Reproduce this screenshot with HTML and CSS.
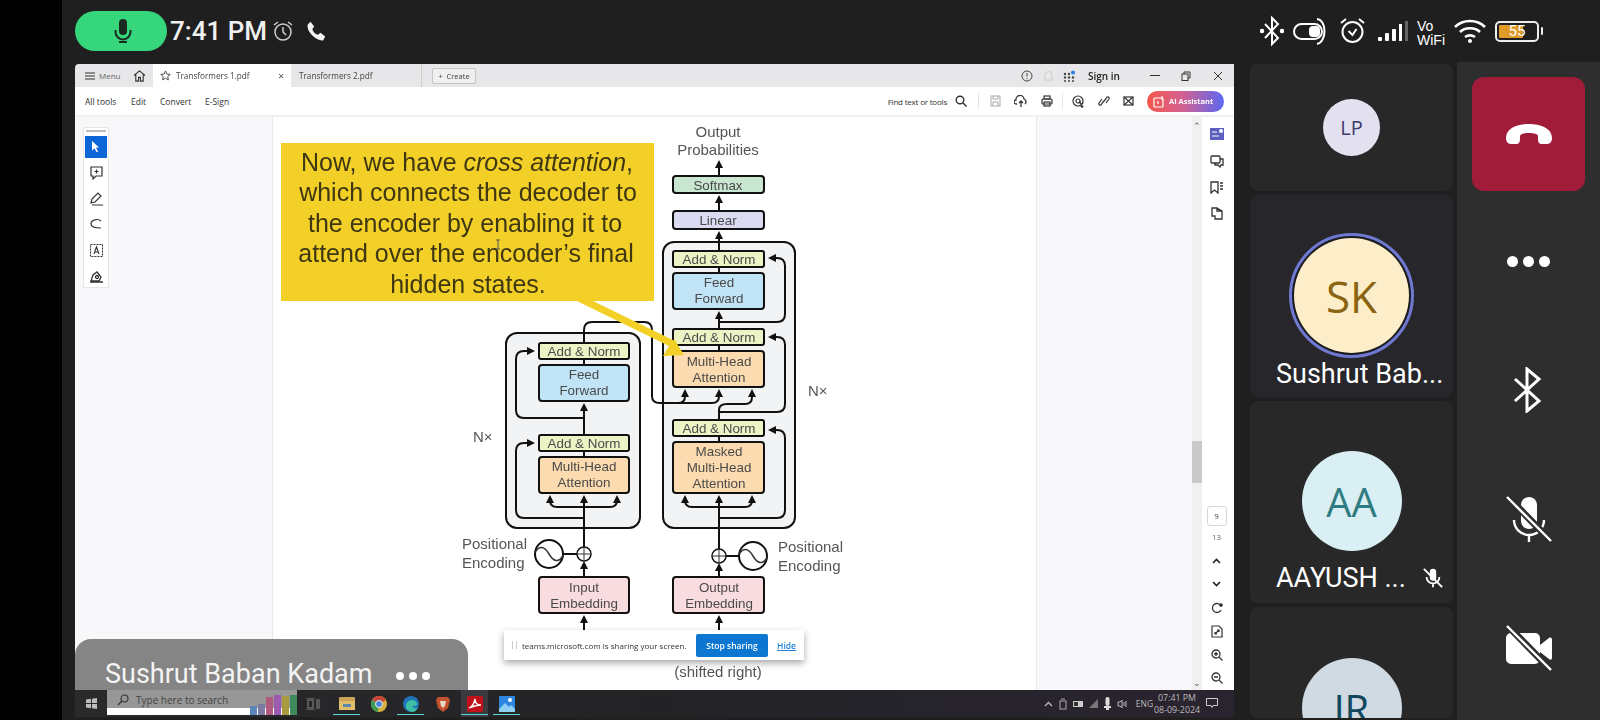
FILE: index.html
```html
<!DOCTYPE html>
<html lang="en">
<head>
<meta charset="utf-8">
<title>Teams call screen share</title>
<link rel="stylesheet" href="styles.css">
</head>
<body>
<div class="strip"></div>
<div class="app">
  <header class="status">
    <div class="status-left">
      <div class="pill">
        <svg width="24" height="28" viewBox="0 0 24 28"><rect x="8" y="2" width="8" height="16" rx="4" fill="#1c2b22"/><path d="M4.500 13v2a7.500 7.500 0 0 0 15 0v-2" fill="none" stroke="#1c2b22" stroke-width="2"/><path d="M8 25h8" stroke="#1c2b22" stroke-width="2"/></svg>
      </div>
      <span class="clock">7:41 PM</span>
      <svg class="alarm-small" width="24" height="24" viewBox="0 0 24 24" fill="none" stroke="#cfcfcf" stroke-width="1.500"><circle cx="12" cy="13" r="8"/><path d="M12 8v5l3 3M3 6l4-3M21 6l-4-3"/></svg>
      <svg class="phone-small" width="22" height="22" viewBox="0 0 24 24"><path fill="#f2f2f2" d="M6 2l4 5-2 3c1 3 3 5 6 6l3-2 5 4-2 4c-3 1-8-1-12-5S2 8 3 5z"/></svg>
    </div>
    <div class="status-right">
      <svg width="24" height="32" viewBox="0 0 24 32" fill="none" stroke="#fff" stroke-width="2"><path d="M5 9l13 14-6 6V3l6 6L5 23"/><circle cx="2" cy="16" r="1.300" fill="#fff"/><circle cx="22" cy="16" r="1.300" fill="#fff"/></svg>
      <svg width="34" height="28" viewBox="0 0 34 28" fill="none" stroke="#fff" stroke-width="2"><rect x="1" y="7" width="28" height="15" rx="7.500"/><rect x="17" y="10" width="9" height="9" rx="3" fill="#fff"/><path d="M24 2c10 1 10 23 0 25"/></svg>
      <svg width="33" height="30" viewBox="0 0 33 30" fill="none" stroke="#fff" stroke-width="2"><circle cx="16.500" cy="16" r="10"/><path d="M12.500 15l4 4 4-6M5 7l5-4M28 7l-5-4"/></svg>
      <svg width="30" height="22" viewBox="0 0 30 22" fill="#fff"><rect x="0" y="17" width="4" height="4" rx="1"/><rect x="7" y="13" width="4" height="8" rx="1"/><rect x="14" y="9" width="4" height="12" rx="1"/><rect x="21" y="4" width="3" height="17"/><rect x="27" y="1" width="3" height="20" fill="#666"/></svg>
      <div class="vowifi"><span>Vo</span><span>WiFi</span></div>
      <svg width="32" height="26" viewBox="0 0 32 26" fill="none" stroke="#fff" stroke-width="2.600"><path d="M1 9c8-8 22-8 30 0M6 14c5-5 15-5 20 0M11 19c3-2 7-2 10 0"/><circle cx="16" cy="23" r="2" fill="#fff" stroke="none"/></svg>
      <div class="battery"><div class="battery-body"><span class="battery-fill"></span><span class="battery-num">55</span></div><span class="battery-cap"></span></div>
    </div>
  </header>

  <div class="stage">
    <section class="share">
      <div class="tabbar">
        <svg class="ic-menu" width="10" height="10" viewBox="0 0 10 10" stroke="#333" stroke-width="1"><path d="M0 2h10M0 5h10M0 8h10"/></svg>
        <span class="t-menu">Menu</span>
        <svg class="ic-home" width="13" height="13" viewBox="0 0 14 14" fill="none" stroke="#333" stroke-width="1.200"><path d="M1 7l6-5 6 5M3 6v7h3V9h2v4h3V6"/></svg>
        <div class="tab active">
          <svg width="11" height="11" viewBox="0 0 12 12" fill="none" stroke="#444"><path d="M6 1l1.500 3.400 3.700.4-2.800 2.400.8 3.600L6 9l-3.200 1.800.8-3.600L.8 4.800l3.700-.4z"/></svg>
          <span class="tab-title">Transformers 1.pdf</span>
          <span class="tab-x">×</span>
        </div>
        <div class="tab second"><span class="tab-title">Transformers 2.pdf</span></div>
        <div class="create">+&nbsp;&nbsp;Create</div>
        <div class="tabbar-right">
          <svg width="12" height="12" viewBox="0 0 12 12" fill="none" stroke="#444"><circle cx="6" cy="6" r="5"/><path d="M6 3v3.500M6 8v1"/></svg>
          <svg width="11" height="12" viewBox="0 0 11 12" fill="none" stroke="#ccc"><path d="M2 9V5a3.500 3.500 0 0 1 7 0v4l1 1H1zM5 11h1"/></svg>
          <svg width="12" height="12" viewBox="0 0 12 12" fill="#444"><circle cx="2" cy="4" r="1.200"/><circle cx="6" cy="4" r="1.200"/><circle cx="2" cy="7.500" r="1.200"/><circle cx="6" cy="7.500" r="1.200"/><circle cx="10" cy="7.500" r="1.200"/><circle cx="2" cy="11" r="1"/><circle cx="6" cy="11" r="1"/><circle cx="10" cy="11" r="1"/><circle cx="10" cy="2.500" r="2" fill="#2a7fe0"/></svg>
          <span class="signin">Sign in</span>
          <span class="win win-min"></span>
          <svg class="win-restore" width="10" height="10" viewBox="0 0 10 10" fill="none" stroke="#333"><rect x="1" y="3" width="6" height="6.500"/><path d="M3 3V1h6v6H7"/></svg>
          <svg class="win-close" width="10" height="10" viewBox="0 0 10 10" stroke="#333"><path d="M1 1l8 8M9 1L1 9"/></svg>
        </div>
      </div>
      <div class="toolbar">
        <span class="tb-all">All tools</span><span class="tb-edit">Edit</span><span class="tb-conv">Convert</span><span class="tb-sign">E-Sign</span>
        <div class="toolbar-right">
          <span class="find">Find text or tools</span>
          <svg width="12" height="12" viewBox="0 0 12 12" fill="none" stroke="#333" stroke-width="1.400"><circle cx="5" cy="5" r="3.800"/><path d="M8 8l3.500 3.500"/></svg>
          <span class="sep"></span>
          <svg width="11" height="12" viewBox="0 0 11 12" fill="none" stroke="#aaa"><rect x="1" y="1" width="9" height="10"/><path d="M3 1v3h5V1M3 11V7h5v4"/></svg>
          <svg width="14" height="13" viewBox="0 0 14 13" fill="none" stroke="#333" stroke-width="1.300"><path d="M3 9H2a2 2 0 0 1 0-4 4 4 0 0 1 8-1 3 3 0 0 1 1 5M7 12V6M5 8l2-2 2 2"/></svg>
          <svg width="12" height="12" viewBox="0 0 12 12" fill="none" stroke="#333" stroke-width="1.200"><rect x="3" y="1" width="6" height="3"/><rect x="1" y="4" width="10" height="5" rx="1"/><rect x="3" y="7" width="6" height="4"/></svg>
          <span class="sep tight"></span>
          <svg width="13" height="13" viewBox="0 0 13 13" fill="none" stroke="#333" stroke-width="1.200"><circle cx="6" cy="6" r="5"/><circle cx="6" cy="6" r="2"/><path d="M8 6v1.500a1.500 1.500 0 0 0 3 0M10 10v3M8.500 11.500h3"/></svg>
          <svg width="12" height="12" viewBox="0 0 12 12" fill="none" stroke="#333" stroke-width="1.200"><path d="M5 7l-2 3a1.500 1.500 0 0 1-2-2l3-4M7 5l2-3a1.500 1.500 0 0 1 2 2L8 8M4 8l4-4"/></svg>
          <svg width="11" height="10" viewBox="0 0 11 10" fill="none" stroke="#333" stroke-width="1.200"><rect x="1" y="1" width="9" height="8"/><path d="M1 1l4.500 4L10 1M1 9l4.500-4L10 9"/></svg>
          <div class="ai"><svg width="12" height="13" viewBox="0 0 12 13" fill="none" stroke="#fff" stroke-width="1.200"><rect x="1" y="3" width="9" height="9" rx="1"/><path d="M5 6v3M9 1v4"/></svg><span>AI Assistant</span></div>
        </div>
      </div>
      <div class="doc">
        <aside class="left-panel">
          <div class="tools">
            <span class="grip"></span>
            <div class="tool selected"><svg width="10" height="12" viewBox="0 0 10 12" fill="#fff"><path d="M1 0l7 6.500H5l2 4-1.500.8-2-4L1 9.500z"/></svg></div>
            <div class="tool"><svg width="15" height="15" viewBox="0 0 15 15" fill="none" stroke="#333" stroke-width="1.200"><path d="M2 2h11v9H7l-3 3v-3H2zM7.500 4.500v4M5.500 6.500h4"/></svg></div>
            <div class="tool"><svg width="15" height="15" viewBox="0 0 15 15" fill="none" stroke="#333" stroke-width="1.200"><path d="M2 12l1-4 6-6 3 3-6 6zM3 14h11"/></svg></div>
            <div class="tool"><svg width="15" height="15" viewBox="0 0 15 15" fill="none" stroke="#333" stroke-width="1.200"><path d="M12 4C9 1 2 3 2 7c0 4 6 4 10 4H8"/></svg></div>
            <div class="tool"><svg width="15" height="15" viewBox="0 0 15 15" fill="none" stroke="#333" stroke-width="1.100"><rect x="1.500" y="1.500" width="12" height="12" stroke-dasharray="2 1"/><path d="M5 11l2.500-7L10 11M6 9h3"/></svg></div>
            <div class="tool"><svg width="15" height="15" viewBox="0 0 15 15" fill="none" stroke="#333" stroke-width="1.300"><path d="M2 12l2-6 4-3 4 5-2 4zM1 13h13"/><circle cx="8" cy="8" r="1.500"/></svg></div>
          </div>
        </aside>
        <main class="page">
          <svg class="diagram" viewBox="273 117 763 573" width="763" height="573">
            <defs>
              <marker id="ah" markerUnits="userSpaceOnUse" markerWidth="9" markerHeight="9" refX="6" refY="4.500" orient="auto"><path d="M0 0.500L8 4.500L0 8.500z" fill="#111"/></marker>
            </defs>
            <rect class="frame" x="663" y="242" width="132" height="286" rx="11"/>
            <rect class="frame" x="506" y="333" width="134" height="195" rx="11"/>

            <path class="wire" d="M719 175V162" marker-end="url(#ah)"/>
            <path class="wire" d="M719 211V197" marker-end="url(#ah)"/>
            <path class="wire" d="M719 251V233" marker-end="url(#ah)"/>
            <path class="wire" d="M719 267V273"/>
            <path class="wire" d="M719 351V345"/>
            <path class="wire" d="M719 329V313" marker-end="url(#ah)"/>
            <path class="wire" d="M719 322H777Q785 322 785 314V266Q785 258 777 258H770" marker-end="url(#ah)"/>
            <path class="wire" d="M719 420V410Q719 404 727 404H745Q752 404 752 397V391" marker-end="url(#ah)"/>
            <path class="wire" d="M719 412H777Q785 412 785 404V345Q785 337 777 337H770" marker-end="url(#ah)"/>
            <path class="wire" d="M584 343V330Q584 322 592 322H644Q652 322 652 330V396Q652 403 660 403H712Q719 403 719 396V391" marker-end="url(#ah)"/>
            <path class="wire" d="M678 403Q685 403 685 396V391" marker-end="url(#ah)"/>
            <path class="wire" d="M719 436V442"/>
            <path class="wire" d="M719 563V497" marker-end="url(#ah)"/>
            <path class="wire" d="M719 507H692Q685 507 685 500V497" marker-end="url(#ah)"/>
            <path class="wire" d="M719 507H745Q752 507 752 500V497" marker-end="url(#ah)"/>
            <path class="wire" d="M719 518H777Q785 518 785 510V438Q785 430 777 430H770" marker-end="url(#ah)"/>
            <path class="wire" d="M719 577V565" marker-end="url(#ah)"/>
            <path class="wire" d="M719 630V617" marker-end="url(#ah)"/>
            <path class="wire" d="M726 556H739"/>

            <path class="wire" d="M584 435V405" marker-end="url(#ah)"/>
            <path class="wire" d="M584 401V359"/>
            <path class="wire" d="M584 418H524Q516 418 516 410V359Q516 351 524 351H533" marker-end="url(#ah)"/>
            <path class="wire" d="M584 452V457"/>
            <path class="wire" d="M584 561V497" marker-end="url(#ah)"/>
            <path class="wire" d="M584 507H557Q550 507 550 500V497" marker-end="url(#ah)"/>
            <path class="wire" d="M584 507H610Q617 507 617 500V497" marker-end="url(#ah)"/>
            <path class="wire" d="M584 518H524Q516 518 516 510V451Q516 443 524 443H533" marker-end="url(#ah)"/>
            <path class="wire" d="M584 577V563" marker-end="url(#ah)"/>
            <path class="wire" d="M584 630V617" marker-end="url(#ah)"/>
            <path class="wire" d="M563 554H577"/>

            <rect class="box green" x="673" y="176" width="91" height="17" rx="3"/><text class="lbl" x="718" y="190">Softmax</text>
            <rect class="box lilac" x="673" y="211" width="91" height="18" rx="3"/><text class="lbl" x="718" y="225">Linear</text>

            <rect class="box lime" x="673" y="251" width="91" height="16" rx="2"/><text class="lbl" x="719" y="264">Add &amp; Norm</text>
            <rect class="box sky" x="673" y="273" width="91" height="36" rx="3"/><text class="lbl" x="719" y="287">Feed</text><text class="lbl" x="719" y="303">Forward</text>
            <rect class="box lime" x="673" y="329" width="91" height="16" rx="2"/><text class="lbl" x="719" y="342">Add &amp; Norm</text>
            <rect class="box peach" x="673" y="351" width="91" height="36" rx="3"/><text class="lbl" x="719" y="366">Multi-Head</text><text class="lbl" x="719" y="382">Attention</text>
            <rect class="box lime" x="673" y="420" width="91" height="16" rx="2"/><text class="lbl" x="719" y="433">Add &amp; Norm</text>
            <rect class="box peach" x="673" y="442" width="91" height="51" rx="3"/><text class="lbl" x="719" y="456">Masked</text><text class="lbl" x="719" y="472">Multi-Head</text><text class="lbl" x="719" y="488">Attention</text>
            <rect class="box pink" x="673" y="577" width="91" height="36" rx="3"/><text class="lbl" x="719" y="592">Output</text><text class="lbl" x="719" y="608">Embedding</text>

            <rect class="box lime" x="539" y="343" width="90" height="16" rx="2"/><text class="lbl" x="584" y="356">Add &amp; Norm</text>
            <rect class="box sky" x="539" y="365" width="90" height="36" rx="3"/><text class="lbl" x="584" y="379">Feed</text><text class="lbl" x="584" y="395">Forward</text>
            <rect class="box lime" x="539" y="435" width="90" height="16" rx="2"/><text class="lbl" x="584" y="448">Add &amp; Norm</text>
            <rect class="box peach" x="539" y="457" width="90" height="36" rx="3"/><text class="lbl" x="584" y="471">Multi-Head</text><text class="lbl" x="584" y="487">Attention</text>
            <rect class="box pink" x="539" y="577" width="90" height="36" rx="3"/><text class="lbl" x="584" y="592">Input</text><text class="lbl" x="584" y="608">Embedding</text>

            <circle class="sum" cx="584" cy="554" r="7"/><path class="thin" d="M578 554H590M584 548V560"/>
            <circle class="sum" cx="719" cy="556" r="7"/><path class="thin" d="M713 556H725M719 550V562"/>
            <circle class="sine" cx="549" cy="554" r="14"/><path class="thin2" d="M535 552Q542 542 549 554T563 556"/>
            <circle class="sine" cx="753" cy="556" r="14"/><path class="thin2" d="M739 554Q746 544 753 556T767 558"/>

            <text class="side mid" x="718" y="137">Output</text>
            <text class="side mid" x="718" y="155">Probabilities</text>
            <text class="side" x="473" y="442">N×</text>
            <text class="side" x="808" y="396">N×</text>
            <text class="side" x="462" y="549">Positional</text>
            <text class="side" x="462" y="568">Encoding</text>
            <text class="side" x="778" y="552">Positional</text>
            <text class="side" x="778" y="571">Encoding</text>
            <text class="side mid" x="718" y="677">(shifted right)</text>

            <rect class="callout" x="281" y="143" width="373" height="158"/>
            <polygon class="callout" points="575,300 591,300 677,342 673,337 684,355 663,356 669,346"/>
            <text class="say" x="467" y="171">Now, we have <tspan class="em">cross attention</tspan>,</text>
            <text class="say" x="468" y="201">which connects the decoder to</text>
            <text class="say" x="465" y="232">the encoder by enabling it to</text>
            <text class="say" x="466" y="262">attend over the encoder’s final</text>
            <text class="say" x="468" y="293">hidden states.</text>
            <path class="ibeam" d="M496 240h4M498 240v9M496 249h4"/>
          </svg>
        </main>
        <div class="gutter"></div>
        <div class="scroll">
          <span class="scroll-up">⌃</span>
          <span class="thumb"></span>
          <span class="scroll-down">⌄</span>
        </div>
        <nav class="rail">
          <svg class="r1" width="14" height="12" viewBox="0 0 14 12"><rect width="14" height="12" fill="#5a5fc0"/><path d="M2 4h5M2 8h7" stroke="#fff"/><circle cx="11" cy="3" r="2" fill="#fff"/></svg>
          <svg class="r2" width="14" height="13" viewBox="0 0 14 13" fill="none" stroke="#333" stroke-width="1.300"><rect x="1" y="1" width="9" height="7" rx="1"/><path d="M10 4h3v6h-2l-1 2-2-2H5V8"/></svg>
          <svg class="r3" width="14" height="13" viewBox="0 0 14 13" fill="none" stroke="#333" stroke-width="1.300"><path d="M1 1h7v11L4.500 9 1 12zM10 2h3M10 5h3M10 8h3"/></svg>
          <svg class="r4" width="12" height="13" viewBox="0 0 12 13" fill="none" stroke="#333" stroke-width="1.300"><path d="M1 1h5v3h5v8H4V9H1zM6 1l5 3"/></svg>
          <div class="pagebox">9</div>
          <span class="pagetotal">13</span>
          <svg class="r5" width="9" height="6" viewBox="0 0 9 6" fill="none" stroke="#222" stroke-width="1.600"><path d="M1 5l3.500-3.500L8 5"/></svg>
          <svg class="r6" width="9" height="6" viewBox="0 0 9 6" fill="none" stroke="#222" stroke-width="1.600"><path d="M1 1l3.500 3.500L8 1"/></svg>
          <svg class="r7" width="12" height="12" viewBox="0 0 12 12" fill="none" stroke="#333" stroke-width="1.300"><path d="M10 8a4.500 4.500 0 1 1 0-4"/><circle cx="10" cy="3" r="1.200" fill="#333"/></svg>
          <svg class="r8" width="12" height="13" viewBox="0 0 12 13" fill="none" stroke="#333" stroke-width="1.200"><path d="M1 1h7l3 3v8H1zM4 9l4-4M6 5h2v2M4 7v2h2"/></svg>
          <svg class="r9" width="12" height="12" viewBox="0 0 12 12" fill="none" stroke="#333" stroke-width="1.300"><circle cx="5" cy="5" r="4"/><path d="M8 8l3.500 3.500M3 5h4M5 3v4"/></svg>
          <svg class="r10" width="12" height="12" viewBox="0 0 12 12" fill="none" stroke="#333" stroke-width="1.300"><circle cx="5" cy="5" r="4"/><path d="M8 8l3.500 3.500M3 5h4"/></svg>
        </nav>
      </div>
      <div class="taskbar">
        <svg class="tk-win" width="11" height="11" viewBox="0 0 11 11" fill="#bbb"><path d="M0 1.500l5-.7V5H0zM6 .7l5-.7v5H6zM0 6h5v4.200l-5-.7zM6 6h5v5l-5-.7z"/></svg>
        <div class="search">
          <svg width="12" height="12" viewBox="0 0 12 12" fill="none" stroke="#333" stroke-width="1.100"><circle cx="7.500" cy="4.500" r="3.500"/><path d="M5 7L1 11"/></svg>
          <span>Type here to search</span>
          <div class="books"><i class="b1"></i><i class="b2"></i><i class="b3"></i><i class="b4"></i><i class="b5"></i><i class="b6"></i></div>
        </div>
        <svg class="tk-view" width="14" height="12" viewBox="0 0 14 12" fill="none" stroke="#888"><rect x="2" y="2" width="5" height="8"/><path d="M0 0h9M0 12h9M11 1v10M13 1v10"/></svg>
        <div class="apps">
          <span class="app-ic run"><svg width="16" height="13" viewBox="0 0 16 13"><rect width="16" height="13" rx="1" fill="#c9a455"/><rect y="4" width="16" height="9" fill="#e0bd6a"/><rect x="4" y="7" width="8" height="3" fill="#5a87a8"/></svg></span>
          <span class="app-ic"><svg width="16" height="16" viewBox="0 0 16 16"><circle cx="8" cy="8" r="8" fill="#d8b23a"/><path d="M8 8L1 4a8 8 0 0 1 14 0z" fill="#c8453a"/><path d="M8 8L1 4a8 8 0 0 0 6 12z" fill="#3f9a52"/><circle cx="8" cy="8" r="3.500" fill="#4a86d8" stroke="#eee"/></svg></span>
          <span class="app-ic run"><svg width="16" height="16" viewBox="0 0 16 16"><circle cx="8" cy="8" r="8" fill="#1f74b8"/><path d="M3 9a6 6 0 0 1 11-2c1 3-3 3-5 3 1 2 4 3 6 2a8 8 0 0 1-5 4C6 16 2 13 3 9z" fill="#3fc0a5"/></svg></span>
          <span class="app-ic"><svg width="14" height="16" viewBox="0 0 14 16"><path d="M2 1h10l2 3-2 8-5 4-5-4L0 4z" fill="#c3512c"/><path d="M4 5h6l-1 5-2 2-2-2z" fill="#e8d8c8"/></svg></span>
          <span class="app-ic run active"><svg width="16" height="16" viewBox="0 0 16 16"><rect width="16" height="16" rx="2" fill="#c1121c"/><path d="M2 12c3-1 5-4 6-9 0 4 2 6 6 6-4 0-7 1-12 3z" fill="none" stroke="#fff" stroke-width="1.300"/></svg></span>
          <span class="app-ic run"><svg width="16" height="16" viewBox="0 0 16 16"><rect width="16" height="16" rx="1" fill="#2d86df"/><path d="M0 13l6-6 4 4 2-2 4 4v3H0z" fill="#8fd0f5"/><circle cx="11" cy="4" r="2" fill="#fff"/></svg></span>
        </div>
        <div class="tray">
          <svg width="9" height="6" viewBox="0 0 9 6" fill="none" stroke="#bbb" stroke-width="1.300"><path d="M1 5l3.500-3.500L8 5"/></svg>
          <svg width="8" height="12" viewBox="0 0 8 12" fill="none" stroke="#aaa"><rect x="1" y="3" width="6" height="8"/><path d="M2 1h4"/></svg>
          <svg width="10" height="6" viewBox="0 0 10 6"><rect width="10" height="6" fill="#ccc"/><rect x="1" y="1" width="4" height="4" fill="#333"/></svg>
          <svg width="9" height="9" viewBox="0 0 9 9" fill="#777"><path d="M0 9L9 0v9z"/></svg>
          <svg width="7" height="13" viewBox="0 0 7 13" fill="#ddd"><rect x="1.500" width="4" height="9" rx="2"/><rect y="9" width="7" height="2"/><rect x="2" y="11" width="3" height="2"/></svg>
          <svg width="11" height="10" viewBox="0 0 11 10" fill="none" stroke="#bbb"><path d="M1 3v4h2l2 2V1L3 3zM7 3v4M9 2v6"/></svg>
          <span class="eng">ENG</span>
          <div class="datetime"><span>07:41 PM</span><span>08-09-2024</span></div>
          <svg class="notif" width="12" height="11" viewBox="0 0 12 11" fill="none" stroke="#ccc"><path d="M.5.500h11v7H7l-1 2-1-2H.5z"/></svg>
        </div>
      </div>

      <div class="namebar">
        <span class="name-main">Sushrut Baban Kadam</span>
        <div class="name-dots"><i></i><i></i><i></i></div>
      </div>
      <div class="sharebar">
        <span class="share-grip"></span>
        <span class="share-text">teams.microsoft.com is sharing your screen.</span>
        <span class="stop">Stop sharing</span>
        <span class="hide">Hide</span>
      </div>
    </section>

    <section class="people">
      <div class="tile tile-lp"><div class="avatar lp">LP</div></div>
      <div class="tile tile-sk">
        <div class="ring"><div class="avatar sk">SK</div></div>
        <div class="who"><span>Sushrut Bab...</span></div>
      </div>
      <div class="tile tile-aa">
        <div class="avatar aa">AA</div>
        <div class="who"><span>AAYUSH ...</span>
          <svg width="22" height="22" viewBox="0 0 24 24" fill="none" stroke="#fff" stroke-width="2"><rect x="8.500" y="2" width="7" height="13" rx="3.500" fill="#fff" stroke="none"/><path d="M5 11a7 7 0 0 0 14 0M12 18v4"/><path d="M2 2l20 20"/></svg>
        </div>
      </div>
      <div class="tile tile-jr"><div class="avatar jr">JR</div></div>
    </section>

    <aside class="controls">
      <div class="hangup"><svg width="46" height="20" viewBox="0 0 46 20"><path fill="#fff" d="M0 14C0 4 12 0 23 0s23 4 23 14c0 5-3 6-6 6h-4c-3 0-4-2-4-5v-3c0-2-4-3-9-3s-9 1-9 3v3c0 3-1 5-4 5H6c-3 0-6-1-6-6z"/></svg></div>
      <div class="more"><i></i><i></i><i></i></div>
      <svg class="ctl-bt" width="30" height="46" viewBox="0 0 30 46" fill="none" stroke="#fff" stroke-width="3"><path d="M3 12l24 22-12 10V2l12 10L3 34"/></svg>
      <svg class="ctl-mic" width="46" height="46" viewBox="0 0 46 46" fill="none" stroke="#fff" stroke-width="2.400"><rect x="15" y="1" width="16" height="32" rx="8" fill="#fff" stroke="none"/><path d="M8 24a15 15 0 0 0 30 0M23 39v7"/><path d="M1 0l44 45" stroke="#2e2e2e" stroke-width="7"/><path d="M1 1l44 44"/></svg>
      <svg class="ctl-cam" width="46" height="46" viewBox="0 0 46 46"><path fill="#fff" d="M5 8h24a5 5 0 0 1 5 5v7l9-7c1-1 3 0 3 1v19c0 2-2 2-3 1l-9-7v7a5 5 0 0 1-5 5H5a5 5 0 0 1-5-5V13a5 5 0 0 1 5-5z"/><path d="M1 0l44 45" stroke="#2e2e2e" stroke-width="7"/><path d="M1 1l44 44" stroke="#fff" stroke-width="2.400"/></svg>
    </aside>
  </div>
</div>
</body>
</html>
```
FILE: styles.css
```css
* { box-sizing: border-box; }
html, body { margin: 0; height: 720px; overflow: hidden; }
body { display: flex; background: #000; font-family: "Roboto", "Liberation Sans", sans-serif; color: #fff; }

.strip { width: 62px; flex: none; background: #000; }
.app { flex: 1; display: flex; flex-direction: column; background: #1f1f1f; min-width: 0; }

/* status bar */
.status { height: 62px; flex: none; display: flex; align-items: center; justify-content: space-between; padding: 0 57px 0 13px; }
.status-left { display: flex; align-items: center; height: 62px; }
.pill { width: 92px; height: 40px; border-radius: 20px; background: #35d67c; display: flex; align-items: center; justify-content: center; padding-left: 4px; }
.clock { margin-left: 3px; font-size: 26px; font-weight: 500; color: #f0f0f0; width: 100px; white-space: nowrap; }
.alarm-small { margin-left: 1px; }
.phone-small { margin-left: 10px; }
.status-right { display: flex; align-items: center; gap: 9px; height: 62px; }
.vowifi { width: 28px; display: flex; flex-direction: column; font-size: 14px; line-height: 14px; margin-top: 3px; font-family: "Liberation Sans", sans-serif; }
.battery { width: 48px; display: flex; align-items: center; gap: 2px; }
.battery-body { position: relative; width: 44px; height: 21px; border: 2px solid #eee; border-radius: 5px; padding: 2px; }
.battery-fill { display: block; width: 24px; height: 100%; background: #e09a28; border-radius: 1px; }
.battery-num { position: absolute; inset: 0; text-align: center; font-size: 15px; line-height: 17px; }
.battery-cap { width: 2px; height: 8px; background: #eee; border-radius: 1px; }

/* stage */
.stage { flex: 1; display: flex; min-height: 0; }
.share { position: relative; width: 1159px; margin: 2px 0 0 13px; flex: none; display: flex; flex-direction: column; background: #1f1f1f; font-family: "Open Sans", "Liberation Sans", sans-serif; filter: blur(0.35px); overflow: hidden; border-radius: 4px 0 0 0; }

.tabbar { height: 23px; flex: none; background: #e7e7ea; display: flex; align-items: center; color: #333; font-size: 8px; }
.ic-menu { margin-left: 10px; }
.t-menu { margin-left: 4px; width: 29px; color: #666; }
.ic-home { margin-left: 5px; }
.tab { height: 23px; display: flex; align-items: center; }
.tab.active { width: 138px; margin-left: 7px; background: #fff; padding-left: 7px; }
.tab.active svg { margin-right: 5px; }
.tab-title { font-size: 8.200px; color: #444; white-space: nowrap; width: 98px; }
.tab-x { font-size: 11px; color: #555; margin-left: 4px; }
.tab.second { width: 131px; padding-left: 8px; border-right: 1px solid #cfcfcf; }
.create { height: 16px; width: 44px; margin-left: 10px; border: 1px solid #c6c6c6; border-radius: 2px; background: #efeff1; font-size: 7.500px; line-height: 14px; text-align: center; color: #444; }
.tabbar-right { margin-left: auto; display: flex; align-items: center; }
.tabbar-right svg:nth-child(1) { margin-right: 10px; }
.tabbar-right svg:nth-child(2) { margin-right: 9px; }
.signin { margin-left: 13px; width: 35px; font-size: 10px; font-weight: 600; color: #222; }
.win-min { display: block; width: 10px; height: 1px; background: #333; margin-left: 27px; }
.win-restore { margin-left: 21px; }
.win-close { margin-left: 22px; margin-right: 11px; }

.toolbar { height: 30px; flex: none; background: #fff; border-bottom: 2px solid #f0f0f2; display: flex; align-items: center; font-size: 8.500px; color: #333; }
.tb-all { margin-left: 10px; width: 46px; }
.tb-edit { width: 29px; }
.tb-conv { width: 45px; }
.toolbar-right { margin-left: auto; display: flex; align-items: center; gap: 9px; padding-right: 10px; }
.find { font-size: 8px; letter-spacing: -.2px; margin-right: -3px; }
.toolbar-right > svg { margin: 0 2px; }
.sep { width: 1px; height: 16px; background: #e4e4e4; }
.sep.tight { margin: 0 -2px; }
.ai { width: 77px; height: 21px; border-radius: 11px; background: linear-gradient(90deg, #f4584a, #d46090 45%, #5c68f2); color: #fff; display: flex; align-items: center; gap: 4px; padding-left: 6px; font-size: 7.500px; font-weight: 700; white-space: nowrap; margin-left: 2px; }

.doc { height: 573px; flex: none; display: flex; background: #fff; }
.left-panel { width: 198px; flex: none; background: #f8f8fb; border-right: 1px solid #e8e8ea; padding: 10px 0 0 8px; }
.tools { width: 26px; height: 161px; background: #fff; border: 1px solid #e6e6e6; display: flex; flex-direction: column; align-items: center; padding-top: 2px; gap: 4px; }
.grip { width: 20px; height: 2px; background: #bbb; }
.tool { width: 22px; height: 22px; display: flex; align-items: center; justify-content: center; }
.tool.selected { background: #0d66d8; }
.page { width: 763px; flex: none; background: #fff; }
.diagram { display: block; font-family: "Liberation Sans", sans-serif; }
.gutter { width: 156px; flex: none; background: #f8f8fb; border-left: 1px solid #e8e8ea; }
.scroll { position: relative; width: 10px; flex: none; background: #f0f0f1; }
.scroll-up, .scroll-down { position: absolute; left: 0; width: 10px; text-align: center; font-size: 9px; line-height: 9px; color: #555; }
.scroll-up { top: 4px; }
.scroll-down { bottom: 3px; }
.thumb { position: absolute; top: 324px; left: 0; width: 10px; height: 42px; background: #c9c9c9; }
.rail { margin-left: 2px; width: 30px; flex: none; background: #fff; display: flex; flex-direction: column; align-items: center; padding-right: 5px; }
.rail svg { flex: none; }
.r1 { margin-top: 11px; }
.r2 { margin-top: 15px; }
.r3 { margin-top: 13px; }
.r4 { margin-top: 13px; }
.pagebox { margin-top: 286px; width: 20px; height: 20px; border: 1px solid #d8d8d8; border-radius: 3px; font-size: 8px; line-height: 18px; text-align: center; color: #444; }
.pagetotal { margin-top: 5px; font-size: 8px; line-height: 12px; color: #666; }
.r5 { margin-top: 15px; }
.r6 { margin-top: 17px; }
.r7 { margin-top: 15px; }
.r8 { margin-top: 11px; }
.r9 { margin-top: 11px; }
.r10 { margin-top: 11px; }

/* svg diagram parts */
.frame { fill: #f2f3f4; stroke: #111; stroke-width: 2; }
.wire { fill: none; stroke: #111; stroke-width: 2; }
.box { stroke: #111; stroke-width: 2; }
.green { fill: #c9e6d0; }
.lilac { fill: #dadaf0; }
.lime { fill: #eef3c6; }
.sky { fill: #c0e4f6; }
.peach { fill: #fcdbb0; }
.pink { fill: #f9dcdf; }
.lbl { font-size: 13.400px; fill: #4a4a4a; text-anchor: middle; }
.side { font-size: 15px; fill: #555; }
.mid { text-anchor: middle; }
.sum { fill: #fff; stroke: #111; stroke-width: 1.500; }
.sine { fill: #fff; stroke: #111; stroke-width: 2; }
.thin { fill: none; stroke: #333; stroke-width: 1; }
.thin2 { fill: none; stroke: #333; stroke-width: 1.500; }
.callout { fill: #f2d027; }
.say { font-size: 25px; fill: #3f3712; text-anchor: middle; }
.em { font-style: italic; }
.ibeam { fill: none; stroke: #555; stroke-width: 1; }

/* taskbar */
.taskbar { height: 27px; flex: none; background: linear-gradient(90deg, #2a2a2c, #232326 50%, #2a2430); display: flex; align-items: center; position: relative; z-index: 2; }
.tk-win { margin-left: 11px; }
.search { margin-left: 10px; width: 190px; height: 25px; align-self: flex-start; background: linear-gradient(#979797 0, #979797 18px, #fff 18px); display: flex; align-items: center; padding-left: 9px; position: relative; color: #444; font-size: 10px; }
.search > svg { margin-left: 1px; margin-top: -6px; }
.search span { margin-left: 7px; margin-top: -6px; }
.books { position: absolute; right: 0; top: 3px; height: 22px; display: flex; align-items: flex-end; gap: 1px; }
.books i { display: block; width: 7px; }
.b1 { height: 9px; background: #5a86b8; }
.b2 { height: 11px; background: #7a7aa0; }
.b3 { height: 18px; background: #b05a80; }
.b4 { height: 20px; background: #9a5ab0; }
.b5 { height: 19px; background: #a89a40; }
.b6 { height: 20px; background: #3f8a5a; }
.tk-view { margin-left: 9px; }
.apps { display: flex; margin-left: 13px; gap: 5px; }
.app-ic { width: 27px; height: 27px; display: flex; align-items: center; justify-content: center; position: relative; }
.app-ic.active { background: #3a3a3e; }
.app-ic.run::after { content: ""; position: absolute; left: 0; right: 0; bottom: 2px; height: 1px; background: #62d2d2; }
.tray { margin-left: auto; display: flex; align-items: center; gap: 6px; color: #bbb; font-size: 8.500px; padding-right: 16px; }
.eng { margin-left: 2px; }
.datetime { display: flex; flex-direction: column; align-items: center; line-height: 12px; margin-left: -5px; font-size: 8.800px; }

.namebar { position: absolute; left: 0; top: 575px; width: 393px; height: 60px; border-radius: 16px 16px 0 0; background: #858585; display: flex; align-items: flex-start; padding: 20px 0 0 30px; font-family: "Roboto", sans-serif; z-index: 1; }
.name-main { font-size: 27px; line-height: 30px; white-space: nowrap; color: #f4f4f4; }
.name-dots { display: flex; gap: 5px; margin: 13px 0 0 24px; }
.name-dots i { display: block; width: 8px; height: 8px; border-radius: 50%; background: #fff; }
.sharebar { position: absolute; left: 429px; top: 566px; width: 300px; height: 30px; background: #fff; box-shadow: 0 3px 7px rgba(0,0,0,.35); display: flex; align-items: center; font-size: 8px; color: #333; z-index: 1; font-family: "Open Sans", sans-serif; }
.share-grip { width: 5px; height: 8px; margin-left: 8px; border-left: 1px solid #ccc; border-right: 1px solid #ccc; }
.share-text { margin-left: 5px; width: 169px; white-space: nowrap; }
.stop { width: 72px; height: 23px; margin-left: 5px; background: #0c76d0; border-radius: 2px; color: #fff; font-weight: 600; line-height: 23px; text-align: center; font-size: 8.500px; }
.hide { margin-left: 9px; color: #1f7fd6; text-decoration: underline; font-weight: 600; font-size: 8.500px; }

/* participants */
.people { width: 203px; margin: 2px 0 0 16px; flex: none; display: flex; flex-direction: column; gap: 4px; height: 654px; overflow: hidden; }
.tile { background: #282828; border-radius: 8px; flex: none; display: flex; flex-direction: column; align-items: center; }
.tile-lp { height: 127px; justify-content: center; }
.tile-sk { height: 202px; background: #26262b; padding-top: 38px; }
.tile-aa { height: 202px; padding-top: 50px; }
.tile-jr { height: 112px; padding-top: 51px; overflow: hidden; }
.avatar { border-radius: 50%; display: flex; align-items: center; justify-content: center; flex: none; font-family: "Open Sans", "Noto Sans", sans-serif; }
.lp { width: 57px; height: 57px; background: #e3e1f0; color: #3b3a6c; font-size: 20px; font-weight: 500; }
.ring { width: 125px; height: 125px; border-radius: 50%; border: 3px solid #7079d2; background: #1c1c20; display: flex; align-items: center; justify-content: center; }
.sk { width: 115px; height: 115px; background: #fdeec9; color: #8a6410; font-size: 44px; font-weight: 500; }
.aa { width: 100px; height: 100px; background: #daeff3; color: #2f7d80; font-size: 40px; font-weight: 500; }
.jr { width: 100px; height: 100px; background: #cfdae2; color: #12485e; font-size: 40px; font-weight: 500; }
.who { width: 100%; height: 30px; padding: 0 9px 0 26px; display: flex; align-items: center; justify-content: space-between; font-size: 27px; line-height: 30px; white-space: nowrap; font-family: "Roboto", sans-serif; }
.tile-sk .who { margin-top: 1px; }
.tile-aa .who { margin-top: 12px; }

/* controls */
.controls { width: 143px; margin-left: 4px; flex: none; background: #2e2e2e; display: flex; flex-direction: column; align-items: center; padding-top: 15px; }
.hangup { width: 113px; height: 114px; border-radius: 12px; background: #a11c38; display: flex; align-items: center; justify-content: center; }
.more { display: flex; gap: 5px; margin-top: 65px; }
.more i { display: block; width: 11px; height: 11px; border-radius: 50%; background: #fff; }
.ctl-bt { margin-top: 100px; margin-right: 4px; }
.ctl-mic { margin-top: 83px; }
.ctl-cam { margin-top: 83px; }
```
